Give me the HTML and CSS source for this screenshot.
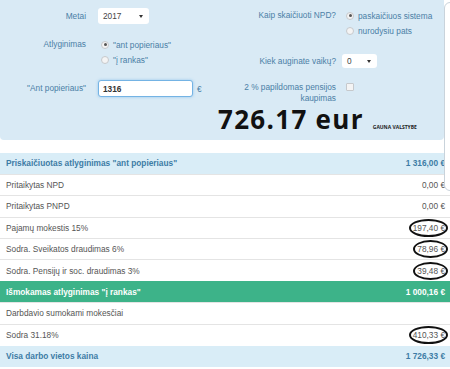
FILE: index.html
```html
<!DOCTYPE html>
<html>

<head>
  <title>Atlyginimo skaičiuoklė</title>
  <link rel="stylesheet" href="styles.css">
</head>

<body>
  <div class="calc">
    <!-- Form panel -->
    <div class="panel">
      <div class="form-grid">
        <div class="col col-left">
          <div class="field">
            <label class="label label-year">Metai</label>
            <div class="select select-year"><span>2017</span><span class="caret"></span></div>
          </div>
          <div class="field">
            <label class="label label-radio">Atlyginimas</label>
            <div class="radio-list">
              <label class="radio-item"><span class="radio checked"></span>"ant popieriaus"</label>
              <label class="radio-item"><span class="radio"></span>"į rankas"</label>
            </div>
          </div>
          <div class="field">
            <label class="label label-input">"Ant popieriaus"</label>
            <div class="input-wrap">
              <input type="text" class="amount-input" value="1316">
              <span class="currency">€</span>
            </div>
          </div>
        </div>

        <div class="col col-right">
          <div class="field">
            <label class="label label-radio">Kaip skaičiuoti NPD?</label>
            <div class="radio-list">
              <label class="radio-item"><span class="radio checked"></span>paskaičiuos sistema</label>
              <label class="radio-item"><span class="radio"></span>nurodysiu pats</label>
            </div>
          </div>
          <div class="field field-kids">
            <label class="label label-kids">Kiek auginate vaikų?</label>
            <div class="select select-kids"><span>0</span><span class="caret"></span></div>
          </div>
          <div class="field">
            <label class="label label-check">2 % papildomas pensijos kaupimas</label>
            <span class="checkbox"></span>
          </div>
        </div>
      </div>

      <div class="total">
        <span class="total-sum">726.17 eur</span>
        <span class="total-note">Gauna valstybe</span>
      </div>
    </div>
    <!-- panel ends -->

    <table class="results">
      <tr class="row-info">
        <td>Priskaičiuotas atlyginimas "ant popieriaus"</td>
        <td class="amount">1 316,00 €</td>
      </tr>
      <tr>
        <td>Pritaikytas NPD</td>
        <td class="amount">0,00 €</td>
      </tr>
      <tr>
        <td>Pritaikytas PNPD</td>
        <td class="amount">0,00 €</td>
      </tr>
      <tr>
        <td>Pajamų mokestis 15%</td>
        <td class="amount"><span class="circled">197,40 €</span></td>
      </tr>
      <tr>
        <td>Sodra. Sveikatos draudimas 6%</td>
        <td class="amount"><span class="circled">78,96 €</span></td>
      </tr>
      <tr>
        <td>Sodra. Pensijų ir soc. draudimas 3%</td>
        <td class="amount"><span class="circled">39,48 €</span></td>
      </tr>
      <tr class="row-success">
        <td>Išmokamas atlyginimas "į rankas"</td>
        <td class="amount">1 000,16 €</td>
      </tr>
      <tr>
        <td>Darbdavio sumokami mokesčiai</td>
        <td class="amount"></td>
      </tr>
      <tr>
        <td>Sodra 31.18%</td>
        <td class="amount"><span class="circled">410,33 €</span></td>
      </tr>
      <tr class="row-info">
        <td>Visa darbo vietos kaina</td>
        <td class="amount">1 726,33 €</td>
      </tr>
    </table>

    <div class="side-popup"></div>
  </div>
</body>

</html>
```

FILE: styles.css
```css
body {
  margin: 0;
  background-color: #fff;
  font-family: "Liberation Sans", Arial, sans-serif;
  font-size: 8.3px;
  color: #555;
}

.calc {
  position: relative;
  width: 450px;
  overflow: hidden;
}

/* Form panel */
.panel {
  width: 444px;
  height: 140px;
  box-sizing: border-box;
  padding-top: 8px;
  background-color: #d9eaf5;
  border-radius: 0 0 4px 4px;
}

.form-grid {
  display: grid;
  grid-template-columns: 225px 1fr;
}

.col {
  display: flex;
  flex-direction: column;
  gap: 13px;
}

.col-left .field {
  display: grid;
  grid-template-columns: 86px 1fr;
  column-gap: 12px;
}

.col-right .field {
  display: grid;
  grid-template-columns: 111px 1fr;
  column-gap: 6px;
}

.col-right .field-kids {
  margin-top: 3px;
}

.label {
  text-align: right;
  color: #4b7fa6;
}

.label-year {
  line-height: 16px;
}

.label-radio {
  line-height: 15px;
}

.label-input {
  line-height: 17px;
}

.label-kids {
  line-height: 14px;
}

.label-check {
  line-height: 11px;
  padding-top: 1px;
}

.select {
  display: flex;
  align-items: center;
  justify-content: space-between;
  background-color: #fff;
  border-radius: 3px;
  padding: 0 6px 0 5px;
  color: #444;
  box-sizing: border-box;
}

.select-year {
  width: 51px;
  height: 16px;
}

.select-kids {
  width: 35px;
  height: 14px;
}

.caret {
  width: 0;
  height: 0;
  border-left: 2px solid transparent;
  border-right: 2px solid transparent;
  border-top: 3px solid #333;
}

.radio-list {
  display: flex;
  flex-direction: column;
}

.radio-item {
  display: flex;
  align-items: center;
  height: 15px;
  color: #4b7fa6;
}

.radio {
  width: 6px;
  height: 6px;
  border: 1px solid #c6c9cc;
  border-radius: 50%;
  background-color: #f4f4f4;
  margin: 0 4px 0 3px;
  position: relative;
}

.col-right .radio {
  margin-left: 4px;
}

.radio.checked::after {
  content: "";
  position: absolute;
  left: 1.5px;
  top: 1.5px;
  width: 3px;
  height: 3px;
  border-radius: 50%;
  background-color: #555;
}

.input-wrap {
  display: flex;
  align-items: center;
  gap: 4px;
}

.amount-input {
  width: 95px;
  height: 17px;
  box-sizing: border-box;
  border: 1px solid #74b3e4;
  border-radius: 3px;
  box-shadow: 0 0 3px rgba(102, 175, 233, 0.6);
  padding: 0 4px;
  font-family: inherit;
  font-size: 8.3px;
  font-weight: bold;
  color: #333;
  outline: none;
}

.currency {
  color: #4b7fa6;
}

.checkbox {
  width: 6px;
  height: 6px;
  margin: 2px 0 0 4px;
  border: 1px solid #c6c9cc;
  border-radius: 1px;
  background-color: #f4f4f4;
}

/* Big total */
.total {
  display: flex;
  align-items: baseline;
  gap: 9px;
  padding-left: 218px;
  line-height: 31px;
}

.total-sum {
  font-family: "Open Sans", sans-serif;
  font-weight: 700;
  font-size: 26px;
  letter-spacing: 1.3px;
  color: #111;
}

.total-note {
  font-family: "Open Sans", sans-serif;
  font-weight: 700;
  font-size: 5px;
  text-transform: uppercase;
  color: #222;
}

/* Results table */
.results {
  width: 100%;
  margin-top: 13px;
  border-collapse: collapse;
}

.results td {
  height: 21.4px;
  box-sizing: border-box;
  padding: 0 5px 0 6px;
  border-top: 1px solid #e4e4e4;
  white-space: nowrap;
}

.results .amount {
  text-align: right;
}

.row-info td {
  background-color: #d9edf7;
  color: #3d7ca5;
  font-weight: bold;
  border-top: none;
}

.row-success td {
  background-color: #3db389;
  color: #fff;
  font-weight: bold;
  border-top: none;
}

.circled {
  position: relative;
}

.circled::after {
  content: "";
  position: absolute;
  left: -4px;
  right: -3px;
  top: -4px;
  bottom: -4px;
  border: 2px solid #111;
  border-radius: 50%;
}

/* Popup edge on the right */
.side-popup {
  position: absolute;
  left: 444px;
  top: 2px;
  width: 30px;
  height: 187px;
  background-color: #fff;
  border: 1px solid #c9d3db;
  border-radius: 6px;
}
```
